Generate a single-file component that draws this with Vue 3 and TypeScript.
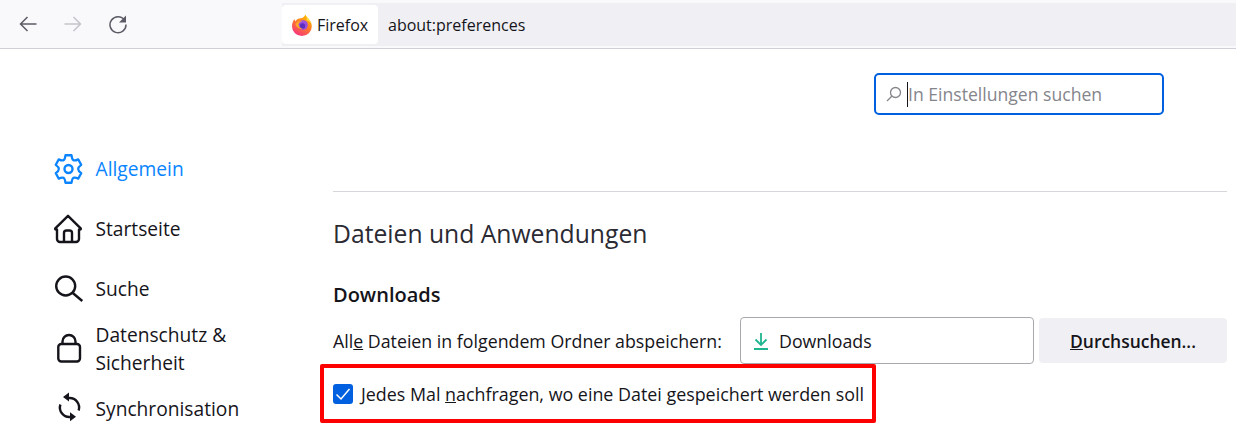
<script setup lang="ts">
interface NavItem { id: string; label: string; active?: boolean }
const nav: NavItem[] = [
  { id: 'gear', label: 'Allgemein', active: true },
  { id: 'home', label: 'Startseite' },
  { id: 'search', label: 'Suche' },
  { id: 'lock', label: 'Datenschutz & Sicherheit' },
  { id: 'sync', label: 'Synchronisation' },
]
</script>

<template>
  <div class="page">
    <header class="toolbar">
      <div class="navbtns">
        <svg class="tb" viewBox="0 0 20 20"><path d="M18.500 10H2.500M9.500 3l-7 7 7 7" /></svg>
        <svg class="tb fwd" viewBox="0 0 20 20"><path d="M1.500 10h16M10.500 3l7 7-7 7" /></svg>
        <svg class="tb" viewBox="0 0 20 20"><path d="M16.600 6.200A8 8 0 1 0 18 10.500" /><path class="fill" d="M18 1.500v7h-7z" /></svg>
      </div>
      <div class="urlbar">
        <div class="identity">
          <svg class="ff" viewBox="0 0 20 22">
            <defs>
              <linearGradient id="ffa" x1="0.8" y1="0.1" x2="0.3" y2="1">
                <stop offset="0" stop-color="#ffb800" />
                <stop offset="0.45" stop-color="#ff7a2c" />
                <stop offset="1" stop-color="#f5347f" />
              </linearGradient>
            </defs>
            <path d="M13.500 0.500c0.500 2.500 2.500 3 4 5.500 1.500 2 2.300 4 2.300 6.500A9.900 9.500 0 0 1 0 12.500c0-3 0.800-5.500 2.500-7.500 0 1 0.500 1.800 1 2.200 1-2 3-3 5-3 2 0 4-1.500 5-3.700z" fill="url(#ffa)" />
            <path d="M13.500 0.500c0.500 2.500 2.500 3 4 5.500 0.800 1 1.400 2.300 1.800 3.500-1.500-2-3.500-3-5-3.200 1-1.800 0.300-3.800-0.800-5.800z" fill="#ffdf40" />
            <circle cx="11" cy="11" r="4.800" fill="#9a4fe0" />
            <circle cx="10.500" cy="12" r="2.700" fill="#5a2ec0" />
            <path d="M3.500 10c1.500-2.500 4-3.300 7-3-2 0.500-3.500 1.800-4 3.500.3 2 2 3.800 4.500 4.300-3 .7-7-1.300-7.500-4.800z" fill="#ffa62c" />
          </svg>
          <span>Firefox</span>
        </div>
        <span class="url">about:preferences</span>
      </div>
    </header>

    <div class="content">
      <aside class="sidebar">
        <div v-for="item in nav" :key="item.id" class="navitem" :class="{ active: item.active }">
          <svg class="navicon" viewBox="0 0 30 30">
            <template v-if="item.id === 'gear'">
              <path transform="translate(14.500 15) scale(.92 .975) translate(-15 -15)" d="M11.740 .87H18.260Q18.900 5 20.250 5.910Q22 6.800 25.600 5.110L28.870 10.760Q25.500 13 25.500 15Q25.500 17 28.870 19.240L25.600 24.890Q22 23.200 20.250 24.090Q18.900 25 18.260 29.130H11.740Q11.100 25 9.750 24.090Q8 23.200 4.400 24.890L1.130 19.240Q4.500 17 4.500 15Q4.500 13 1.130 10.760L4.400 5.110Q8 6.800 9.750 5.910Q11.100 5 11.740 .87Z" />
              <circle cx="14.500" cy="15" r="4" />
            </template>
            <template v-else-if="item.id === 'home'">
              <path d="M14 1.800 1.300 14.300Q0.800 15.500 2 15.500H3V25a3 3 0 0 0 3 3H22a3 3 0 0 0 3-3V15.500H26Q27.200 15.500 26.700 14.300Z" />
              <path d="M10 28V19a2.500 2.500 0 0 1 2.500-2.500h3A2.500 2.500 0 0 1 18 19v9" />
            </template>
            <template v-else-if="item.id === 'search'">
              <circle cx="11.700" cy="12" r="9.500" />
              <path d="M18.800 19 28.300 27" />
            </template>
            <template v-else-if="item.id === 'lock'">
              <rect x="4.300" y="10" width="21.700" height="17.500" rx="3" />
              <path d="M8.500 10V7.500a6.500 6.500 0 0 1 13 0V10" />
            </template>
            <template v-else>
              <path d="M15 4A9.500 9.500 0 0 1 24.600 16.500" />
              <path d="M16 23A9.500 9.500 0 0 1 6.400 10.500" />
              <path class="fill" d="M9 3 15 -1.500V7.500z" />
              <path class="fill" d="M22 22.800 16 18.300V27.300z" />
            </template>
          </svg>
          <span class="navlabel">{{ item.label }}</span>
        </div>
      </aside>

      <main class="main">
        <div class="searchrow">
          <div class="searchbox">
            <svg class="magn" viewBox="0 0 16 16"><circle cx="9.500" cy="6.500" r="5" /><path d="M6 10l-5 5" /></svg>
            <span class="caret"></span>
            <span class="placeholder">In Einstellungen suchen</span>
          </div>
        </div>
        <hr class="rule" />
        <h1 class="title">Dateien und Anwendungen</h1>
        <h2 class="subtitle">Downloads</h2>
        <div class="folderrow">
          <span class="folderlabel">All<u>e</u> Dateien in folgendem Ordner abspeichern:</span>
          <div class="folderbox">
            <svg class="dl" viewBox="0 0 16 18"><path d="M8 1v11M2.500 7.500 8 13l5.500-5.500M1 17h14" /></svg>
            <span>Downloads</span>
          </div>
          <button class="browse" type="button"><u>D</u>urchsuchen...</button>
        </div>
        <div class="askwrap">
          <div class="ask">
            <span class="check">
              <svg viewBox="0 0 20 20"><path d="M3.500 10.500 8 15l8.500-10" /></svg>
            </span>
            <span>Jedes Mal <u>n</u>achfragen, wo eine Datei gespeichert werden soll</span>
          </div>
        </div>
      </main>
    </div>
  </div>
</template>

<style>
html, body { margin: 0; padding: 0; background: #fff; }
</style>

<style scoped>
.page {
  width: 1236px;
  height: 438px;
  overflow: hidden;
  font-family: "Open Sans", "Noto Sans", sans-serif;
  color: #15141a;
  background: #fff;
}
.toolbar {
  height: 49px;
  box-sizing: border-box;
  padding-top: 3px;
  display: flex;
  background: #f9f9fb;
  border-bottom: 1px solid #cfcfd8;
}
.navbtns {
  width: 282px;
  display: flex;
  align-items: flex-start;
  gap: 25px;
  padding: 11px 0 0 18px;
  box-sizing: border-box;
}
.tb { width: 20px; height: 20px; fill: none; stroke: #5b5b66; stroke-width: 1.500; }
.tb.fwd { stroke: #c4c4ca; }
.tb .fill { fill: #5b5b66; stroke: none; }
.urlbar {
  flex: 1;
  height: 43px;
  background: #f0f0f4;
  display: flex;
  align-items: center;
  font-size: 16px;
}
.identity {
  width: 96px;
  height: 39px;
  box-sizing: border-box;
  background: #fff;
  border-radius: 4px;
  display: flex;
  align-items: center;
  gap: 5px;
  padding-left: 10px;
  margin-right: 10px;
}
.ff { width: 20px; height: 22px; }
.content { display: flex; }
.sidebar {
  width: 333px;
  flex: none;
  box-sizing: border-box;
  padding: 90px 0 0 54px;
}
.navitem {
  display: flex;
  align-items: center;
  gap: 11.500px;
  height: 60px;
  font-size: 19.200px;
  line-height: 28px;
}
.navitem.active { color: #0a84ff; }
.navlabel { width: 150px; }
.navicon {
  width: 30px;
  height: 30px;
  flex: none;
  fill: none;
  stroke: currentColor;
  stroke-width: 2.400;
  stroke-linejoin: round;
  overflow: visible;
}
.navicon .fill { fill: currentColor; stroke: none; }
.main { flex: 1; min-width: 0; padding-right: 9px; }
.searchrow {
  display: flex;
  justify-content: flex-end;
  padding: 24px 63px 0 0;
}
.searchbox {
  width: 290px;
  height: 42px;
  box-sizing: border-box;
  border: 2px solid #0060df;
  border-radius: 5px;
  display: flex;
  align-items: center;
  padding-left: 10px;
  color: #85858c;
  font-size: 17.600px;
}
.magn { width: 16px; height: 16px; fill: none; stroke: #85858c; stroke-width: 1.300; flex: none; }
.caret { width: 1px; height: 25px; background: #15141a; margin: 0 0 0 5px; flex: none; }
.rule {
  margin: 76px 0 0;
  border: 0;
  height: 1px;
  background: #d7d7db;
}
.title {
  margin: 24px 0 0;
  font-size: 24.700px;
  line-height: 36px;
  font-weight: 400;
  color: #2b2a33;
}
.subtitle {
  margin: 29px 0 0;
  font-size: 20px;
  line-height: 28px;
  font-weight: 600;
}
.folderrow {
  display: flex;
  align-items: center;
  margin-top: 8px;
  font-size: 17.780px;
}
.folderlabel { width: 407px; flex: none; }
.folderbox {
  width: 294px;
  height: 47px;
  box-sizing: border-box;
  border: 1px solid #a8a8ae;
  border-radius: 4px;
  display: flex;
  align-items: center;
  gap: 10px;
  padding-left: 12px;
  flex: none;
}
.dl { width: 16px; height: 18px; fill: none; stroke: #1fb58f; stroke-width: 1.800; flex: none; }
.browse {
  margin-left: 5px;
  width: 188px;
  height: 45px;
  border: 0;
  border-radius: 4px;
  background: #f0f0f4;
  font: inherit;
  font-size: 17.450px;
  font-weight: 600;
  color: #15141a;
  padding: 0;
}
.askwrap { margin: 0 0 0 -13px; }
.ask {
  width: 556px;
  height: 59px;
  box-sizing: border-box;
  border: 4px solid #ff0000;
  border-radius: 2px;
  display: flex;
  align-items: center;
  gap: 8px;
  padding-left: 9px;
  font-size: 17.870px;
}
.check {
  width: 20px;
  height: 20px;
  border-radius: 3px;
  background: #0060df;
  flex: none;
  display: flex;
}
.check svg { width: 20px; height: 20px; fill: none; stroke: #fff; stroke-width: 1.500; }
</style>
